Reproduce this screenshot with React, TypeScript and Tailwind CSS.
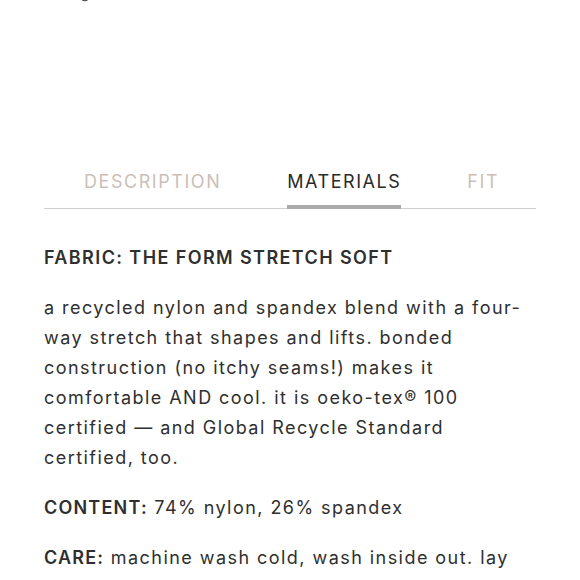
export default function App() {
  const tabs = ["DESCRIPTION", "MATERIALS", "FIT"];
  const active = "MATERIALS";

  return (
    <div className="w-[580px] h-[580px] overflow-hidden bg-white text-[#2f2f2f] font-['Inter',sans-serif]">
      <div className="h-[5px] overflow-hidden">
        <div className="mt-[-19px] pl-[80px] text-[16px] leading-[22px] text-[#555]">g</div>
      </div>

      <div className="mx-[44px] mt-[165px] flex border-b border-[#cfcfcf] pl-[40px]">
        {tabs.map((t, i) => (
          <div
            key={t}
            className={
              (i > 0 ? "ml-[66px] " : "") +
              "-mb-px pb-[11px] text-[18px] leading-[24px] tracking-[1.55px] border-b-[4px] " +
              (t === active
                ? "text-[#2a2a2a] border-[#a9a9a9]"
                : "text-[#cbbfb8] border-transparent")
            }
          >
            {t}
          </div>
        ))}
      </div>

      <div className="mx-[44px] mt-[34px] text-[18px] leading-[30px] tracking-[1.45px]">
        <p className="font-semibold tracking-[1.4px]">FABRIC: THE FORM STRETCH SOFT</p>
        <p className="mt-[20px] whitespace-nowrap">
          a recycled nylon and spandex blend with a four-
          <br />
          way stretch that shapes and lifts. bonded
          <br />
          construction (no itchy seams!) makes it
          <br />
          comfortable AND cool. it is oeko-tex® 100
          <br />
          certified — and Global Recycle Standard
          <br />
          certified, too.
        </p>
        <p className="mt-[20px]">
          <span className="font-semibold tracking-[1.2px]">CONTENT:</span> 74% nylon, 26% spandex
        </p>
        <p className="mt-[20px] whitespace-nowrap">
          <span className="font-semibold tracking-[1.2px]">CARE:</span> machine wash cold, wash inside out. lay
          <br />
          flat to dry. do not tumble dry, bleach or iron.
        </p>
      </div>
    </div>
  );
}
